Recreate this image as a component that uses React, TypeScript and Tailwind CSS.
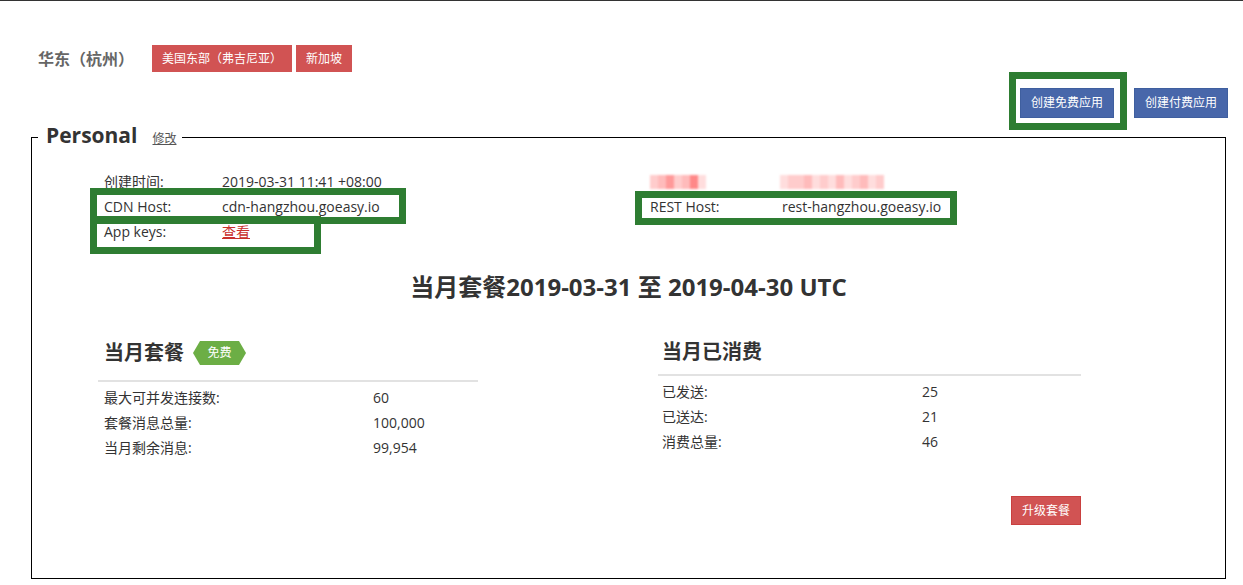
const font = '[font-family:"Open_Sans","Noto_Sans_CJK_SC",sans-serif]';

const Pixels = ({ colors }: { colors: string[] }) => (
  <div className="flex h-[14px] blur-[1px]">
    {colors.map((c, i) => (
      <div key={i} className="h-full w-[8px]" style={{ backgroundColor: c }} />
    ))}
  </div>
);

const InfoRow = ({ label, value, labelW }: { label: string; value: React.ReactNode; labelW: string }) => (
  <div className="flex leading-[25px]">
    <div className={labelW}>{label}</div>
    <div>{value}</div>
  </div>
);

const StatRow = ({ label, value, labelW }: { label: string; value: string; labelW: string }) => (
  <div className="flex leading-[25px]">
    <div className={labelW}>{label}</div>
    <div>{value}</div>
  </div>
);

export default function App() {
  return (
    <div className={`relative h-[585px] w-[1243px] overflow-hidden border-t border-[#333] bg-white text-[14px] text-[#333] ${font}`}>
      {/* region tabs */}
      <div className="flex items-center pl-[38px] pt-[44px]">
        <div className="w-[114px] text-[16px] font-bold text-[#666]">华东（杭州）</div>
        <div className="flex gap-[4px]">
          <button className="h-[27px] bg-[#d15353] px-[10px] text-[12px] text-white">美国东部（弗吉尼亚）</button>
          <button className="h-[27px] bg-[#d15353] px-[10px] text-[12px] text-white">新加坡</button>
        </div>
      </div>

      {/* create buttons */}
      <div className="mt-[16px] flex justify-end gap-[20px] pr-[15px]">
        <button className="h-[30px] w-[94px] border border-[#3f5f9f] bg-[#4867aa] text-[12px] text-white">创建免费应用</button>
        <button className="h-[30px] w-[94px] border border-[#3f5f9f] bg-[#4867aa] text-[12px] text-white">创建付费应用</button>
      </div>

      <fieldset className="ml-[31px] mt-[3px] h-[458px] w-[1195px] border border-black">
        <legend className="ml-[6px] flex items-baseline pl-[8px] pr-[6px] leading-[28px]">
          <span className="text-[21px] font-bold text-[#333]">Personal</span>
          <a href="#" className="ml-[15px] text-[12px] text-[#555] underline">修改</a>
        </legend>

        {/* app info */}
        <div className="flex pt-[16px]">
          <div className="ml-[72px] w-[546px]">
            <InfoRow labelW="w-[118px]" label="创建时间:" value="2019-03-31 11:41 +08:00" />
            <InfoRow labelW="w-[118px]" label="CDN Host:" value="cdn-hangzhou.goeasy.io" />
            <InfoRow
              labelW="w-[118px]"
              label="App keys:"
              value={<a href="#" className="text-[#c9302c] underline">查看</a>}
            />
          </div>
          <div>
            <div className="flex h-[25px] items-center">
              <div className="w-[130px]">
                <Pixels colors={['#fcc', '#fbb', '#f99', '#fcc', '#fbb', '#f88', '#fdd', '#fff']} />
              </div>
              <Pixels colors={['#fdd', '#fcc', '#fcc', '#fbb', '#fdd', '#fcc', '#fdd', '#fbb', '#fdd', '#fcc', '#fbb', '#fdd', '#fcc']} />
            </div>
            <InfoRow labelW="w-[132px]" label="REST Host:" value="rest-hangzhou.goeasy.io" />
          </div>
        </div>

        <h2 className="mt-[28px] text-center text-[24px] font-bold leading-[30px] text-[#333]">
          当月套餐2019-03-31 至 2019-04-30 UTC
        </h2>

        <div className="mt-[28px] flex">
          {/* current plan */}
          <div className="ml-[66px] w-[380px]">
            <div className="flex h-[46px] items-center pl-[6px]">
              <span className="text-[20px] font-bold">当月套餐</span>
              <span className="ml-[9px] flex h-[24px] w-[53px] items-center justify-center bg-[#6cae45] text-[12px] text-white [clip-path:polygon(7px_0,calc(100%-7px)_0,100%_50%,calc(100%-7px)_100%,7px_100%,0_50%)]">
                免费
              </span>
            </div>
            <div className="mt-[4px] h-[2px] bg-[#e2e2e2]" />
            <div className="mt-[3px] pl-[6px]">
              <StatRow labelW="w-[269px]" label="最大可并发连接数:" value="60" />
              <StatRow labelW="w-[269px]" label="套餐消息总量:" value="100,000" />
              <StatRow labelW="w-[269px]" label="当月剩余消息:" value="99,954" />
            </div>
          </div>

          {/* consumed */}
          <div className="ml-[180px] w-[423px]">
            <div className="flex h-[44px] items-center pl-[4px]">
              <span className="text-[20px] font-bold">当月已消费</span>
            </div>
            <div className="h-[2px] bg-[#e2e2e2]" />
            <div className="mt-[3px] pl-[4px]">
              <StatRow labelW="w-[260px]" label="已发送:" value="25" />
              <StatRow labelW="w-[260px]" label="已送达:" value="21" />
              <StatRow labelW="w-[260px]" label="消费总量:" value="46" />
            </div>
            <div className="mt-[42px] flex justify-end">
              <button className="h-[29px] border border-[#c9403f] bg-[#d15353] px-[10px] text-[12px] text-white">升级套餐</button>
            </div>
          </div>
        </div>
      </fieldset>

      {/* annotation boxes */}
      <div className="absolute left-[1009px] top-[71px] h-[58px] w-[118px] border-[7px] border-[#2e7d32]" />
      <div className="absolute left-[90px] top-[187px] h-[36px] w-[316px] border-[7px] border-[#2e7d32]" />
      <div className="absolute left-[90px] top-[215px] h-[38px] w-[231px] border-[7px] border-[#2e7d32]" />
      <div className="absolute left-[635px] top-[190px] h-[34px] w-[322px] border-[7px] border-[#2e7d32]" />
    </div>
  );
}
